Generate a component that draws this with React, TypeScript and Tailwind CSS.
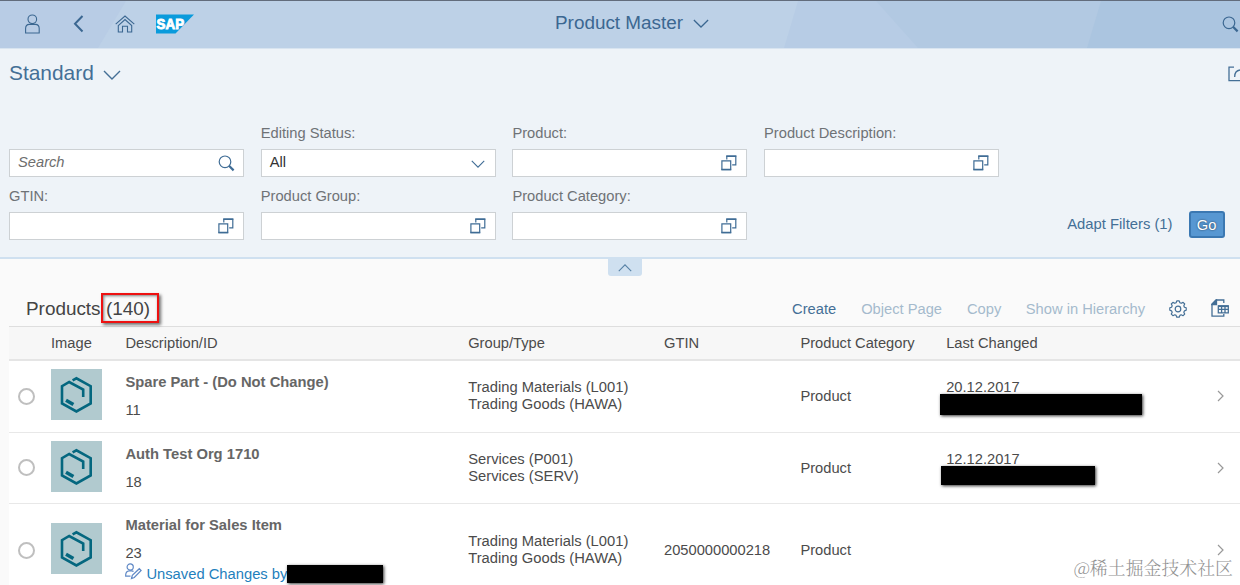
import React from "react";

type IconProps = { className?: string };

function Magnifier({ className = "" }: IconProps) {
  return (
    <svg viewBox="0 0 17 17" className={`h-[17px] w-[17px] shrink-0 ${className}`} fill="none" stroke="currentColor">
      <circle cx="7" cy="6.8" r="5.8" strokeWidth="1.2" />
      <path d="M11 10.8 15.6 15.4" strokeWidth="2.2" />
    </svg>
  );
}

function ValueHelp() {
  return (
    <svg viewBox="0 0 16 16" className="h-4 w-4 shrink-0 text-[#3f6c95]" fill="none" stroke="currentColor" strokeWidth="1.2">
      <path d="M.9 5.8h8.8v8.8H.9z" />
      <path d="M5.8 4.4V1.2h9v8.6h-3.6" />
      <path d="M5.3 1.2h10M.4 14.6h9.8" strokeWidth="1.5" />
    </svg>
  );
}

function Chevron({ className = "" }: IconProps) {
  return (
    <svg viewBox="0 0 18 10" className={`shrink-0 ${className}`} fill="none" stroke="currentColor" strokeWidth="1.4">
      <path d="m1 1 8 8 8-8" />
    </svg>
  );
}

function SapLogo() {
  return (
    <svg viewBox="0 0 38 20" className="h-5 w-[38px]">
      <path d="M0 .5h38L19.5 19.5H0z" fill="#0a9bdc" />
      <text x="0.6" y="15.4" textLength="27.5" lengthAdjust="spacingAndGlyphs" fill="#fff" stroke="#fff" strokeWidth=".9" fontFamily="Liberation Sans, sans-serif" fontWeight="700" fontSize="15.5">SAP</text>
    </svg>
  );
}

function ProductImage() {
  return (
    <div className="flex h-[51px] w-[51px] items-center justify-center bg-[#b1cacf]">
      <svg viewBox="0 0 51 51" className="h-[51px] w-[51px]" fill="none" stroke="#04677f" strokeWidth="2.6">
        <path d="M21.6 11.3 25.4 9.3 39.7 17.2V34.5L25.4 42.4 11 34.5V17.2L18.2 13 32.2 20.6V28" />
        <path d="m15 31.3 7.4 4.2" strokeWidth="3.6" />
      </svg>
    </div>
  );
}

function Redaction({ className = "" }: IconProps) {
  return <div className={`absolute bg-black shadow-[1px_1px_3px_rgba(0,0,0,0.8)] ${className}`} />;
}

function Header() {
  return (
    <header className="relative flex h-[49px] shrink-0 items-center border-t border-b border-t-[#626c7c] border-b-[#d8e4f0] bg-[#bdd1e7] text-[#3b6791]">
      <svg viewBox="0 0 1240 47" className="absolute inset-0 h-[47px] w-[1240px]">
        <path d="M0 0h126L98 47H0z" fill="#b8cce5" />
        <path d="M798 0h442v47H784z" fill="#b7cce5" />
        <path d="M876 0h364v47H918z" fill="#b2c9e2" />
        <path d="M1101 0h139v47h-153z" fill="#abc5e0" />
      </svg>
      <div className="relative flex w-full items-center pb-[2px]">
        <svg viewBox="0 0 16 20" className="ml-[25px] h-5 w-4" fill="none" stroke="currentColor" strokeWidth="1.1">
          <circle cx="7.3" cy="5.3" r="4.3" />
          <path d="M.6 19V14.4q0-3.8 3.8-4h6q3.8.2 3.8 4V19z" />
        </svg>
        <svg viewBox="0 0 11 18" className="ml-8 h-[18px] w-[11px]" fill="none" stroke="currentColor" strokeWidth="2">
          <path d="M9.5 1 2 8.8l7.5 7.7" />
        </svg>
        <svg viewBox="0 0 20 18" className="ml-[31px] h-[18px] w-5" fill="none" stroke="currentColor" strokeWidth="1.1">
          <path d="M.7 9.1 10 1l9.3 8.1M3.3 10.6l6.7-6 6.7 6V17h-4.2v-5.8h-5V17H3.3z" />
        </svg>
        <div className="ml-[21px]"><SapLogo /></div>
        <div className="ml-[361px] flex items-center gap-[10px]">
          <span className="-mt-px whitespace-nowrap text-[18.9px] leading-6">Product Master</span>
          <Chevron className="h-[9px] w-4" />
        </div>
        <Magnifier className="mt-px ml-[513px]" />
      </div>
    </header>
  );
}

type FieldProps = { label?: string; children?: React.ReactNode };

function Field({ label = "", children }: FieldProps) {
  return (
    <div className="h-[63px] w-[235px]">
      <div className="h-[26px] whitespace-nowrap pt-px text-[14.7px] leading-[18px] text-[#6e7276]">{label}</div>
      <div className="flex h-7 items-center justify-between border border-[#cdd1d4] bg-white pr-[9px] pl-2 text-[14px] text-[#333]">
        {children ?? <><span /><ValueHelp /></>}
      </div>
    </div>
  );
}

function Filters() {
  return (
    <section className="relative h-[210px] shrink-0 border-b-2 border-[#cfe0f0] bg-[#eef3f8] px-[9px]">
      <div className="flex h-[74px] items-start justify-between text-[#446f96]">
        <div className="flex items-center gap-[9px] pt-3">
          <span className="text-[20.9px] leading-6">Standard</span>
          <Chevron className="mt-[3px] h-[10px] w-[18px]" />
        </div>
        <svg viewBox="0 0 12 16" className="mt-[17px] -mr-[9px] h-4 w-3" fill="none" stroke="currentColor" strokeWidth="1.3">
          <path d="M6 1.2H1v13.4h11M12 4C8.5 4.5 6.6 7 6.7 11" />
        </svg>
      </div>
      <div className="grid grid-cols-[repeat(4,235px)] gap-x-[16.7px]">
        <Field>
          <span className="-mt-px text-[14.7px] text-[#6e6e6e] italic">Search</span>
          <Magnifier className="-mr-px text-[#3f6c95]" />
        </Field>
        <Field label="Editing Status:">
          <span className="-mt-px text-[14.7px]">All</span>
          <Chevron className="mt-px mr-px h-[8px] w-[14px] text-[#3f6c95]" />
        </Field>
        <Field label="Product:" />
        <Field label="Product Description:" />
        <Field label="GTIN:" />
        <Field label="Product Group:" />
        <Field label="Product Category:" />
      </div>
      <div className="absolute right-[15.5px] bottom-[19px] flex items-center gap-4">
        <span className="whitespace-nowrap text-[14.8px] text-[#446f96]">Adapt Filters (1)</span>
        <button className="h-[27px] w-9 rounded-[3px] border-2 border-[#3b78b2] bg-[#5797d2] text-[14.7px] leading-[22px] text-white [text-shadow:0_0_2px_#234]">Go</button>
      </div>
      <div className="absolute top-[209px] left-[608px] flex h-[18px] w-[34px] items-center justify-center rounded-b-[3px] bg-[#cfe0f0] text-[#5780a5]">
        <Chevron className="mt-px h-[8px] w-[14px] rotate-180" />
      </div>
    </section>
  );
}

type Product = {
  name: string;
  id: string;
  group: string;
  type: string;
  category: string;
  gtin?: string;
  date?: string;
  redaction?: string;
  unsaved?: boolean;
};

const products: Product[] = [
  { name: "Spare Part - (Do Not Change)", id: "11", group: "Trading Materials (L001)", type: "Trading Goods (HAWA)", category: "Product", date: "20.12.2017", redaction: "top-[15px] -left-[6px] h-[21px] w-[202px]" },
  { name: "Auth Test Org 1710", id: "18", group: "Services (P001)", type: "Services (SERV)", category: "Product", date: "12.12.2017", redaction: "top-[15px] -left-[5px] h-[19px] w-[154px]" },
  { name: "Material for Sales Item", id: "23", group: "Trading Materials (L001)", type: "Trading Goods (HAWA)", category: "Product", gtin: "2050000000218", unsaved: true },
];

const columns = "grid grid-cols-[42px_74.4px_342.8px_195.8px_136.4px_145.8px_262px_1fr]";

function Row({ product }: { product: Product }) {
  return (
    <div className={`${columns} items-center border-b border-[#e8e8e8] bg-white text-[#4b4b4b] ${product.unsaved ? "h-[93px]" : "h-[71.5px]"}`}>
      <div className="ml-[8.5px] h-[17px] w-[17px] rounded-full border-2 border-[#bfbfbf]" />
      <div className="-mt-[3px]"><ProductImage /></div>
      <div className="h-full whitespace-nowrap pt-3 leading-[18px]">
        <div className="text-[14.75px] font-bold text-[#666]">{product.name}</div>
        <div className="mt-[10px] text-[14.7px]">{product.id}</div>
        {product.unsaved && (
          <div className="relative mt-[3px] flex items-center text-[14.75px] text-[#1f7fbd]">
            <svg viewBox="0 0 17 17" className="-mt-[5px] h-[17px] w-[17px]" fill="none" stroke="#6089c6" strokeWidth="1.2">
              <circle cx="5.2" cy="4" r="3.1" />
              <path d="M5.5 13.2H.7v-1.4q.2-3.6 3.5-3.9h2.5q1 .1 1.8.7M6.5 15.5l.8-3.1 7-6.7 1.8 1.8-6.8 7z" />
            </svg>
            <span className="ml-1">Unsaved Changes by</span>
            <Redaction className="top-0 left-[162px] h-[18px] w-[96px]" />
          </div>
        )}
      </div>
      <div className="whitespace-nowrap text-[14.75px] leading-[17px]">
        <div>{product.group}</div>
        <div>{product.type}</div>
      </div>
      <div className="text-[14.7px]">{product.gtin}</div>
      <div className="text-[14.7px]">{product.category}</div>
      <div className="relative h-[34px] text-[14.7px] leading-[17px]">
        {product.date}
        {product.redaction && <Redaction className={product.redaction} />}
      </div>
      <svg viewBox="0 0 8 12" className="ml-[9px] h-3 w-2" fill="none" stroke="#999" strokeWidth="1.2">
        <path d="m1 1 5 5-5 5" />
      </svg>
    </div>
  );
}

function Toolbar() {
  return (
    <div className="flex h-[67px] items-end justify-between pl-[17px] text-[#446f96]">
      <div className="flex items-center pb-[3px] text-[18.9px] text-[#444]">
        <span className="pt-[2px]">Products</span>
        <span className="flex h-[30px] w-[58px] items-center justify-center border-2 border-[#ee1111] pt-[2px] pr-[3px] shadow-[2px_2px_3px_rgba(0,0,0,0.55),inset_1px_1px_3px_rgba(0,0,0,0.5)]">(140)</span>
      </div>
      <div className="flex items-center pr-[11px] pb-[6px] text-[14.7px] whitespace-nowrap">
        <span className="-mr-px pr-px">Create</span>
        <span className="ml-[25px] text-[#a5bacd]">Object Page</span>
        <span className="ml-[25px] text-[#a5bacd]">Copy</span>
        <span className="ml-[24.5px] text-[#a5bacd]">Show in Hierarchy</span>
        <svg viewBox="0 0 18 18" className="ml-6 h-[18px] w-[18px]" fill="none" stroke="currentColor" strokeWidth="1.2" strokeLinejoin="round">
          <path d="M7.1 2.8 7.8.9h2.4l.7 1.9 1.3.5 1.9-.9 1.6 1.6-.9 1.8.6 1.4 1.8.6v2.4l-1.8.7-.6 1.3.9 1.9-1.6 1.6-1.9-.9-1.3.6-.7 1.8H7.8l-.7-1.8-1.3-.6-1.9.9-1.6-1.6.9-1.9-.6-1.3-1.8-.7V7.8l1.8-.6.6-1.4L2.3 4l1.6-1.6 1.9.9z" />
          <circle cx="9" cy="9" r="2.8" />
        </svg>
        <svg viewBox="0 0 18 19" className="ml-6 h-[19px] w-[18px]" fill="none" stroke="currentColor" strokeWidth="1.3">
          <path d="M12.8 4V1H5L1 5v12.2h11.8V15" />
          <path d="M1 5.5 5.5 1v4.5z" fill="currentColor" />
          <path d="M7.3 6.8h10v7h-10zM7.3 10.3h10M10.6 7v6.5M14 7v6.5" />
          <path d="M7 7.2h10.5" strokeWidth="1.8" />
        </svg>
      </div>
    </div>
  );
}

export default function App() {
  return (
    <main className="relative flex h-[585px] w-[1240px] flex-col overflow-hidden bg-[#fafafa] font-['Liberation_Sans',Arial,sans-serif]">
      <Header />
      <Filters />
      <section className="ml-[9px]">
        <Toolbar />
        <div className={`${columns} h-[35px] items-center border-t border-b-2 border-t-[#dedede] border-b-[#e5e5e5] bg-[#f7f7f7] text-[14.7px] text-[#4b4b4b]`}>
          <span />
          <span>Image</span>
          <span>Description/ID</span>
          <span>Group/Type</span>
          <span>GTIN</span>
          <span>Product Category</span>
          <span>Last Changed</span>
        </div>
        {products.map((product) => <Row key={product.id} product={product} />)}
      </section>
      <div className="absolute right-[7px] bottom-1 font-['Noto_Serif_CJK_SC','Noto_Sans_CJK_SC',serif] text-[17.9px] leading-[27px] font-light text-[#929292] [text-shadow:0_0_1px_white]">@稀土掘金技术社区</div>
    </main>
  );
}
